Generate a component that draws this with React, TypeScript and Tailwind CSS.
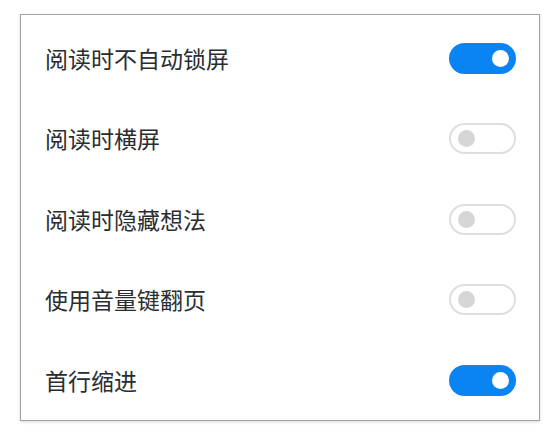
import React, { useState } from 'react';

type Setting = {
    label: string;
    on: boolean;
};

const initialSettings: Setting[] = [
    { label: '阅读时不自动锁屏', on: true },
    { label: '阅读时横屏', on: false },
    { label: '阅读时隐藏想法', on: false },
    { label: '使用音量键翻页', on: false },
    { label: '首行缩进', on: true },
];

const Toggle: React.FC<{ on: boolean; onClick: () => void }> = ({ on, onClick }) => (
    <button
        onClick={onClick}
        className={`flex items-center w-[67px] h-[31px] rounded-full px-[7px] ${
            on ? 'bg-[#0a84f2] justify-end' : 'border-2 border-[#dedede] bg-white justify-start px-[5px]'
        }`}
        aria-pressed={on}
    >
        <span className={`block w-[17px] h-[17px] rounded-full ${on ? 'bg-white' : 'bg-[#d6d6d8]'}`} />
    </button>
);

export default function App() {
    const [settings, setSettings] = useState(initialSettings);

    const toggle = (i: number) =>
        setSettings(s => s.map((item, idx) => (idx === i ? { ...item, on: !item.on } : item)));

    return (
        <div className="w-[560px] h-[437px] bg-white pt-[14px] pl-[20px]">
            <div className="w-[520px] h-[407px] border border-[#a3a3a3] bg-white shadow-[0_1px_3px_rgba(0,0,0,0.15)] pt-[3px]">
                {settings.map((item, i) => (
                    <div key={item.label} className="flex items-center justify-between h-[80.5px] pl-[24px] pr-[23px]">
                        <span className="text-[23px] leading-none text-[#2a2d30] font-['Noto_Sans_CJK_SC',sans-serif]">
                            {item.label}
                        </span>
                        <Toggle on={item.on} onClick={() => toggle(i)} />
                    </div>
                ))}
            </div>
        </div>
    );
}
